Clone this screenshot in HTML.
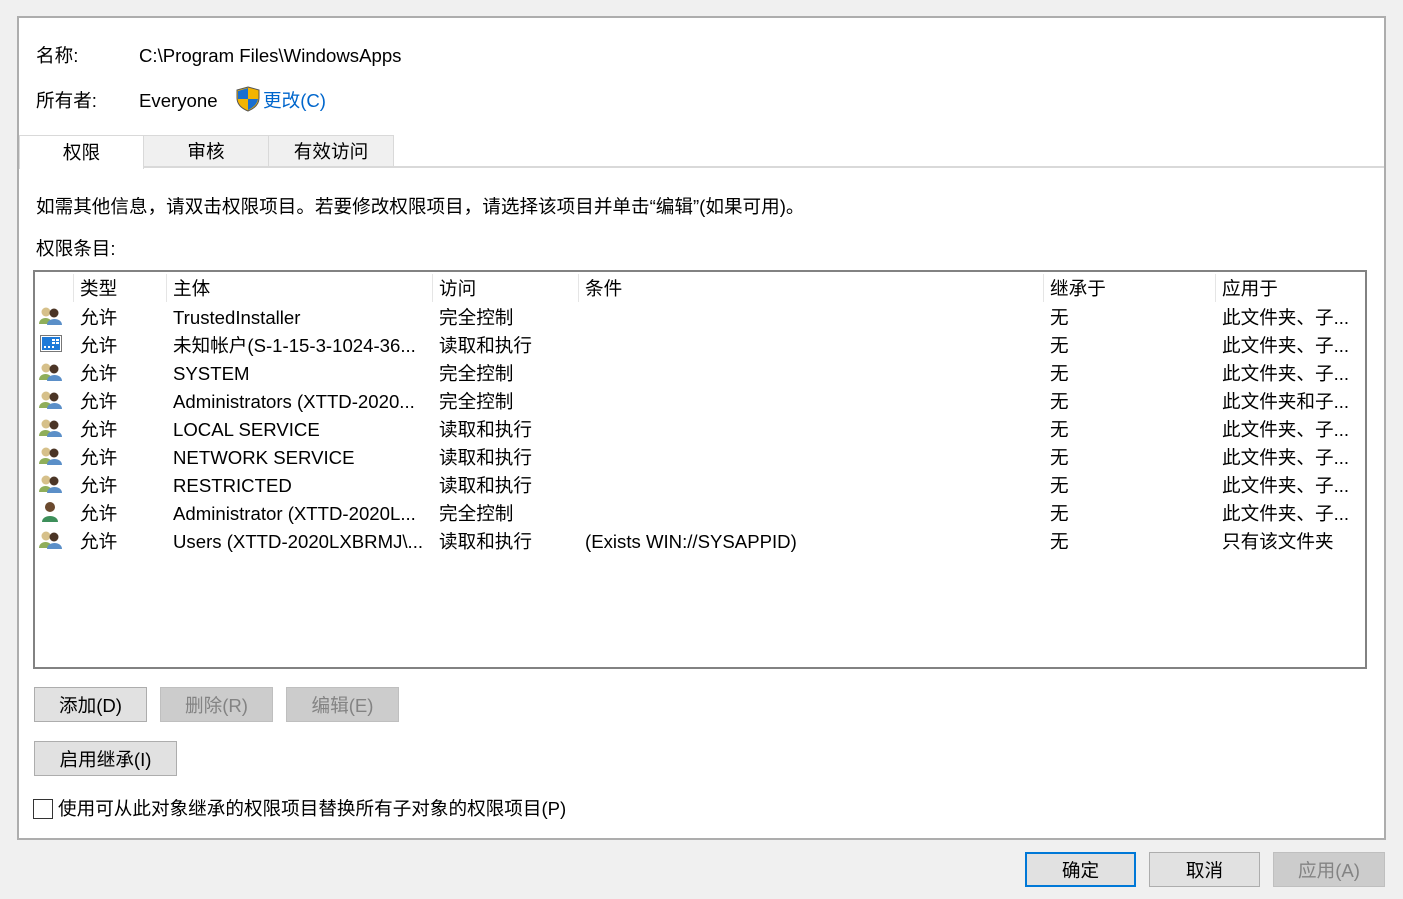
<!DOCTYPE html>
<html><head><meta charset="utf-8"><style>
*{box-sizing:border-box;margin:0;padding:0}
body{width:1403px;height:899px;background:#f0f0f0;font-family:"Liberation Sans","Noto Sans CJK SC",sans-serif;font-size:18.6px;color:#000;position:relative;overflow:hidden}
.a{position:absolute;white-space:nowrap;line-height:26px;height:26px}
.t{margin-top:2px}
.panel{position:absolute;left:17px;top:16px;width:1369px;height:824px;background:#fff;border:2px solid #adadad}
.tab{position:absolute;top:135px;height:32px;background:#f0f0f0;border:1px solid #d9d9d9;text-align:center;line-height:32px}
.list{position:absolute;left:33px;top:270px;width:1334px;height:399px;border:2px solid #828282;background:#fff}
.sep{position:absolute;top:2px;width:1px;height:28px;background:#e5e5e5}
.btn{position:absolute;height:35px;background:#e1e1e1;border:1px solid #adadad;text-align:center;line-height:35px}
.dis{background:#ccc;border-color:#bfbfbf;color:#838383}
</style></head><body>
<div class="panel"></div>
<div class="a" style="left:36px;top:43px">名称:</div>
<div class="a" style="left:139px;top:43px">C:\Program Files\WindowsApps</div>
<div class="a" style="left:36px;top:88px">所有者:</div>
<div class="a" style="left:139px;top:88px">Everyone</div>
<svg class="a" style="left:236px;top:86px" width="24" height="26" viewBox="0 0 24 26"><path d="M12 1 L23 4 L23 12 C23 19 17 23 12 25 C7 23 1 19 1 12 L1 4 Z" fill="#f4b400" stroke="#555" stroke-width="1"/><path d="M12 2 L12 13 L2 13 L2 5 Z" fill="#1a6fd0"/><path d="M12 13 L22 13 C21 19 16 22 12 24 Z" fill="#1a6fd0"/></svg>
<div class="a" style="left:263px;top:88px;color:#0066cc">更改(C)</div>
<div style="position:absolute;left:19px;top:166px;width:1365px;height:2px;background:#d9d9d9"></div>
<div class="tab" style="left:143px;width:126px">审核</div>
<div class="tab" style="left:268px;width:126px">有效访问</div>
<div class="tab" style="left:19px;width:125px;background:#fff;border-color:#d9d9d9;border-bottom:none;height:34px;line-height:34px">权限</div>
<div class="a" style="left:36px;top:194px">如需其他信息，请双击权限项目。若要修改权限项目，请选择该项目并单击“编辑”(如果可用)。</div>
<div class="a" style="left:36px;top:236px">权限条目:</div>
<div class="list">
<div class="sep" style="left:38px"></div><div class="sep" style="left:131px"></div><div class="sep" style="left:397px"></div><div class="sep" style="left:543px"></div><div class="sep" style="left:1008px"></div><div class="sep" style="left:1180px"></div>
</div>
<div id="rows"></div>
<div class="btn" style="left:34px;top:687px;width:113px">添加(D)</div>
<div class="btn dis" style="left:160px;top:687px;width:113px">删除(R)</div>
<div class="btn dis" style="left:286px;top:687px;width:113px">编辑(E)</div>
<div class="btn" style="left:34px;top:741px;width:143px">启用继承(I)</div>
<div style="position:absolute;left:33px;top:799px;width:20px;height:20px;border:1px solid #333;background:#fff"></div>
<div class="a" style="left:58px;top:796px">使用可从此对象继承的权限项目替换所有子对象的权限项目(P)</div>
<div class="btn" style="left:1025px;top:852px;width:111px;border:2px solid #0078d7;line-height:33px">确定</div>
<div class="btn" style="left:1149px;top:852px;width:111px">取消</div>
<div class="btn dis" style="left:1273px;top:852px;width:112px">应用(A)</div>
<script>
var h=[["类型",80],["主体",173],["访问",439],["条件",585],["继承于",1050],["应用于",1222]];
var s="";h.forEach(function(c){s+='<div class="a" style="left:'+c[1]+'px;top:276px">'+c[0]+'</div>'});
var r=[["g","TrustedInstaller","完全控制","","此文件夹、子..."],["m","未知帐户(S-1-15-3-1024-36...","读取和执行","","此文件夹、子..."],["g","SYSTEM","完全控制","","此文件夹、子..."],["g","Administrators (XTTD-2020...","完全控制","","此文件夹和子..."],["g","LOCAL SERVICE","读取和执行","","此文件夹、子..."],["g","NETWORK SERVICE","读取和执行","","此文件夹、子..."],["g","RESTRICTED","读取和执行","","此文件夹、子..."],["u","Administrator (XTTD-2020L...","完全控制","","此文件夹、子..."],["g","Users (XTTD-2020LXBRMJ\\...","读取和执行","(Exists WIN://SYSAPPID)","只有该文件夹"]];
r.forEach(function(x,i){var y=305+i*28;
var ic=x[0]=="m"?'<svg class="a" style="left:40px;top:'+(y+2)+'px" width="22" height="17"><rect x="0.5" y="0.5" width="21" height="16" fill="#fff" stroke="#777"/><rect x="2" y="2" width="18" height="13" fill="#1e7ad8"/><rect x="12" y="4" width="3" height="2" fill="#fff"/><rect x="16" y="4" width="3" height="2" fill="#fff"/><rect x="12" y="7" width="3" height="2" fill="#fff"/><rect x="16" y="7" width="3" height="2" fill="#fff"/><rect x="4" y="11" width="2" height="2" fill="#fff"/><rect x="8" y="11" width="2" height="2" fill="#fff"/><rect x="12" y="11" width="2" height="2" fill="#fff"/></svg>'
:x[0]=="u"?'<svg class="a" style="left:40px;top:'+(y)+'px" width="20" height="22"><circle cx="10" cy="6" r="5" fill="#6b4a2f"/><path d="M2 21 C2 13 18 13 18 21Z" fill="#3d8f5a"/></svg>'
:'<svg class="a" style="left:39px;top:'+(y+1)+'px" width="24" height="20"><circle cx="7" cy="6" r="4.5" fill="#d6c08a"/><path d="M0 18 C0 10 13 10 13 18Z" fill="#8fae5a"/><circle cx="15" cy="7" r="4.5" fill="#4b3526"/><path d="M8 19 C8 11 23 11 23 19Z" fill="#5b8fc8"/></svg>';
s+=ic+'<div class="a" style="left:80px;top:'+y+'px">允许</div><div class="a" style="left:173px;top:'+y+'px">'+x[1]+'</div><div class="a" style="left:439px;top:'+y+'px">'+x[2]+'</div><div class="a" style="left:585px;top:'+y+'px">'+x[3]+'</div><div class="a" style="left:1050px;top:'+y+'px">无</div><div class="a" style="left:1222px;top:'+y+'px">'+x[4]+'</div>';});
document.getElementById("rows").innerHTML=s;
</script>
</body></html>
